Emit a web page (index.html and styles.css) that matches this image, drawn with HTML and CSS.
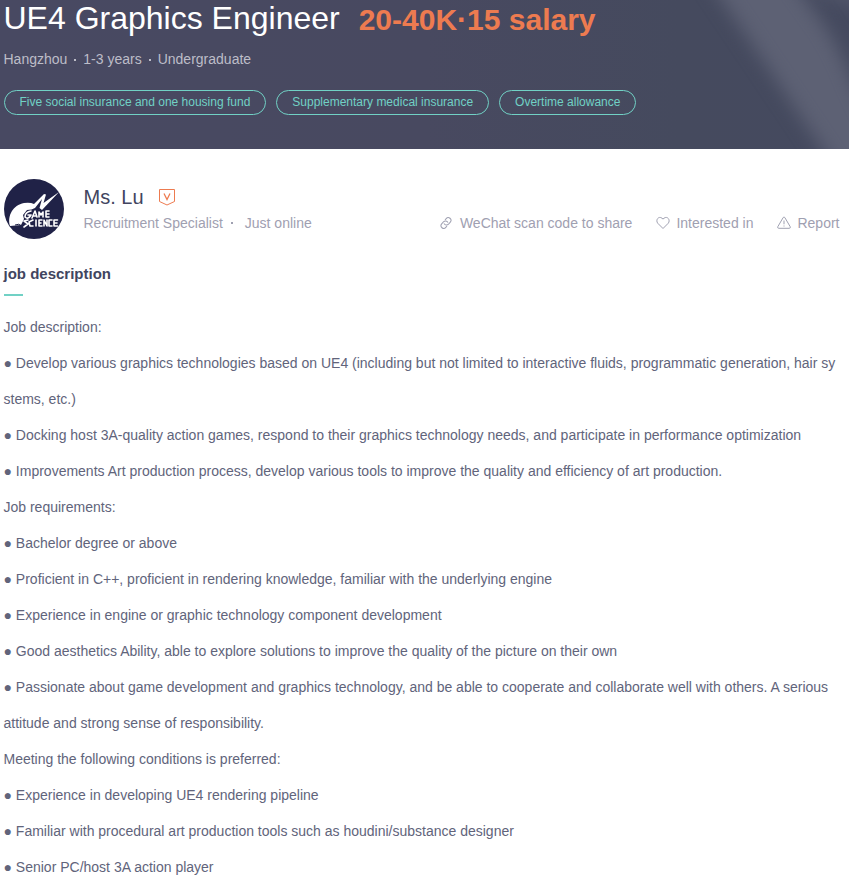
FILE: index.html
```html
<!DOCTYPE html>
<html lang="en">
<head>
<meta charset="utf-8">
<title>UE4 Graphics Engineer</title>
<link rel="stylesheet" href="styles.css">
</head>
<body>
<header class="banner">
  <svg class="banner-art" viewBox="0 0 849 149" preserveAspectRatio="none" aria-hidden="true">
    <defs>
      <filter id="soft" x="-30%" y="-30%" width="160%" height="160%" color-interpolation-filters="sRGB"><feGaussianBlur stdDeviation="9"/></filter>
      <linearGradient id="base" x1="0" x2="1" y1="0" y2="0">
        <stop offset="0" stop-color="#484962"/><stop offset=".5" stop-color="#484960"/><stop offset=".8" stop-color="#454a5e"/><stop offset="1" stop-color="#454a5f"/>
      </linearGradient>
    </defs>
    <rect width="849" height="149" fill="url(#base)"/>
    <path d="M702-30 L785-30 Q806 0 824 25 Q842 52 854 85 L900 180 L850 190 L773 75 Z" fill="#5d6174" filter="url(#soft)"/>
    <path d="M785-30 H890 V12 Q850 8 825-4 Z" fill="#5d6174" opacity=".55" filter="url(#soft)"/>
  </svg>
  <div class="title-row">
    <h1 class="title">UE4 Graphics Engineer</h1>
    <span class="salary">20-40K·15 salary</span>
  </div>
  <p class="facts"><span>Hangzhou</span><i class="dot"></i><span>1-3 years</span><i class="dot"></i><span>Undergraduate</span></p>
  <div class="tags">
    <span class="tag">Five social insurance and one housing fund</span>
    <span class="tag">Supplementary medical insurance</span>
    <span class="tag">Overtime allowance</span>
  </div>
</header>
<main>
  <section class="recruiter">
    <svg class="avatar" viewBox="0 0 60 60" role="img" aria-label="Company logo">
      <circle cx="30" cy="30" r="30" fill="#202247"/>
      <path d="M6 47 C3 37 9 26 20 24 Q26 23 30 25 L40 15 L42 15.500 L39.500 24 L55 13 L38 31 L35.500 29 L38 20 L31 29 Q28 31 23 31 L19 36 L20 40 L17 46 Z" fill="#fff"/>
      <g fill="none" stroke="#fff" stroke-width="1.600" stroke-linejoin="round" stroke-linecap="round">
        <path d="M27 32 Q21 33 21 38 Q24 41 27 36 L24 36 M28 39 L31 32 L33 38 M29 37 H32 M35 38 V33 L37 36 L39 33 V38 M42 32 V38 H45 M42 32 H45 M42 35 H45"/>
        <path d="M24 41 L20 42 L24 45 L20 48 M29 41 L25 43 L26 47 L29 47 M32 41 V47 M38 41 H35 V47 H38 M35 44 H37 M40 47 V41 L43 47 V41 M48 41 H45 V47 H48 M53.500 41 H50 V47 H53.500 M50 44 H53"/>
      </g>
      <path d="M11 46 Q15 44 18 47" fill="none" stroke="#202247" stroke-width="1"/>
    </svg>
    <div class="person">
      <div class="name-row"><span class="name">Ms. Lu</span>
        <svg class="badge" viewBox="0 0 16 18" fill="none" stroke="#ed7b50"><path d="M.5 1.500 H15.500 V13.500 L8 17 L.5 13.500 Z"/><path d="M5 5.500 L8 11.500 L11 5.500" stroke-width="1.300"/></svg>
      </div>
      <div class="role"><span>Recruitment Specialist</span><i class="dot"></i><span>Just online</span></div>
    </div>
    <nav class="actions">
      <span class="action"><svg viewBox="0 0 14 14"><g transform="rotate(-50 7 7)"><path d="M5.300 9.700 H3.500 A2.700 2.700 0 0 1 3.500 4.300 H6.300 A2.700 2.700 0 0 1 8.600 8.300"/><path d="M8.700 4.300 H10.500 A2.700 2.700 0 0 1 10.500 9.700 H7.700 A2.700 2.700 0 0 1 5.400 5.700"/></g></svg>WeChat scan code to share</span>
      <span class="action"><svg viewBox="0 0 14 14"><path d="M7 12.500 L1.800 7.300 C-.8 4.200 2.500-.4 6 2.200 L7 3.100 L8 2.200 C11.500-.4 14.800 4.200 12.200 7.300 Z"/></svg>Interested in</span>
      <span class="action"><svg viewBox="0 0 14 14"><path d="M6.200 1.500 Q7 .4 7.800 1.500 L13.200 10.700 Q13.700 12.300 12.300 12.300 H1.700 Q.3 12.300 .8 10.700 Z M7 4.500 V8.300 M7 9.500 V10.500"/></svg>Report</span>
    </nav>
  </section>
  <section class="job">
    <h2 class="heading">job description</h2>
    <div class="copy">
      <p>Job description:</p>
      <p>● Develop various graphics technologies based on UE4 (including but not limited to interactive fluids, programmatic generation, hair sy<br>stems, etc.)</p>
      <p>● Docking host 3A-quality action games, respond to their graphics technology needs, and participate in performance optimization</p>
      <p>● Improvements Art production process, develop various tools to improve the quality and efficiency of art production.</p>
      <p>Job requirements:</p>
      <p>● Bachelor degree or above</p>
      <p>● Proficient in C++, proficient in rendering knowledge, familiar with the underlying engine</p>
      <p>● Experience in engine or graphic technology component development</p>
      <p>● Good aesthetics Ability, able to explore solutions to improve the quality of the picture on their own</p>
      <p>● Passionate about game development and graphics technology, and be able to cooperate and collaborate well with others. A serious<br>attitude and strong sense of responsibility.</p>
      <p>Meeting the following conditions is preferred:</p>
      <p>● Experience in developing UE4 rendering pipeline</p>
      <p>● Familiar with procedural art production tools such as houdini/substance designer</p>
      <p>● Senior PC/host 3A action player</p>
    </div>
  </section>
</main>
</body>
</html>
```
FILE: styles.css
```css
* { box-sizing: border-box; }
html, body { margin: 0; height: 895px; overflow: hidden; }
body { font-family: "Liberation Sans", Arial, sans-serif; font-size: 14px; color: #61647b; background: #fff; }
h1, h2, p { margin: 0; }
.banner { position: relative; height: 149px; padding-left: 3.5px; overflow: hidden; background: #484962; }
.banner-art { position: absolute; inset: 0; width: 100%; height: 100%; }
.title-row, .facts, .tags { position: relative; display: flex; white-space: nowrap; }
.title-row { height: 40px; gap: 19px; line-height: 37px; }
.title { font-size: 32px; font-weight: 400; color: #fff; }
.salary { font-size: 30px; font-weight: 700; color: #ed7b50; line-height: 40px; }
.facts { height: 20px; margin-top: 9px; line-height: 20px; align-items: center; color: #bdbdc8; }
.dot { width: 2px; height: 2px; margin: 0 7px; background: currentColor; }
.facts .dot { margin: 1px 7px 0; }
.tags { margin-top: 21px; gap: 10px; }
.tag { height: 25px; padding: 0 15px; border: 1px solid #71d1c5; border-radius: 13px; font-size: 12px; line-height: 22px; color: #71d1c5; }
.recruiter { display: flex; height: 60px; margin: 30px 9.500px 0 4px; white-space: nowrap; }
.avatar { width: 60px; height: 60px; flex: none; }
.person { margin-left: 19.500px; }
.name-row { display: flex; align-items: center; height: 36px; gap: 15px; }
.name { font-size: 20px; color: #424560; }
.badge { width: 16px; height: 18px; }
.role { display: flex; align-items: center; height: 16px; line-height: 16px; color: #9fa0b1; }
.role .dot { margin: 0 12px 0 8px; }
.actions { display: flex; gap: 23.500px; margin: 36px 0 0 auto; height: 16px; color: #9fa0b1; }
.action { display: flex; align-items: center; gap: 6.500px; line-height: 16px; }
.action svg { width: 14px; height: 14px; fill: none; stroke: currentColor; stroke-width: 1; }
.job { padding-left: 3.500px; margin-top: 25px; }
.heading { height: 32px; font-size: 15px; line-height: 20px; color: #414560; }
.heading::after { content: ""; display: block; width: 19px; height: 2px; margin: 10px 0 0 .5px; background: #71d1c5; }
.copy { margin-top: 13px; line-height: 36px; white-space: nowrap; }
```
